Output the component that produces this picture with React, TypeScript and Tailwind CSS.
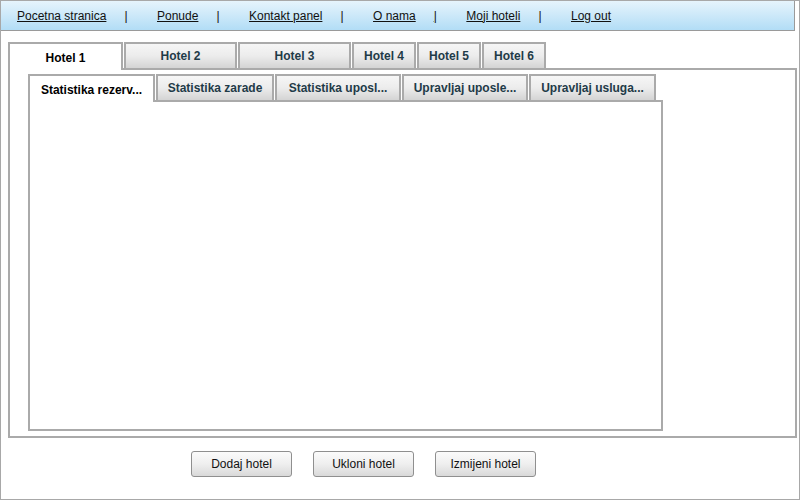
const navItems = ['Pocetna stranica', 'Ponude', 'Kontakt panel', 'O nama', 'Moji hoteli', 'Log out'];

const hotelTabs = [
  { label: 'Hotel 1', w: 'w-[115px]' },
  { label: 'Hotel 2', w: 'w-[113px]' },
  { label: 'Hotel 3', w: 'w-[113px]' },
  { label: 'Hotel 4', w: 'w-[64px]' },
  { label: 'Hotel 5', w: 'w-[64px]' },
  { label: 'Hotel 6', w: 'w-[64px]' },
];

const innerTabs = [
  { label: 'Statistika rezerv...', w: 'w-[127px]' },
  { label: 'Statistika zarade', w: 'w-[118px]' },
  { label: 'Statistika uposl...', w: 'w-[126px]' },
  { label: 'Upravljaj uposle...', w: 'w-[126px]' },
  { label: 'Upravljaj usluga...', w: 'w-[127px]' },
];

const buttons = ['Dodaj hotel', 'Ukloni hotel', 'Izmijeni hotel'];

function Tab({ label, w, active }: { label: string; w: string; active: boolean }) {
  if (active) {
    return (
      <div
        className={`${w} relative z-10 -mb-[2px] flex h-[28px] items-center justify-center border-2 border-b-0 border-[#aaaaaa] bg-white pt-[2px] text-[12px] font-bold text-black`}
      >
        {label}
      </div>
    );
  }
  return (
    <div
      className={`${w} flex h-[26px] items-start justify-center border-2 border-b-0 border-[#aaaaaa] bg-gradient-to-b from-[#f6f6f6] via-[#ececec] to-[#d4d4d4] pt-[3px] text-[12px] font-bold text-[#1f3b48]`}
    >
      {label}
    </div>
  );
}

export default function App() {
  return (
    <div className="h-[500px] w-[800px] overflow-hidden border border-[#a8a8a8] bg-white font-['Liberation_Sans',Arial,sans-serif]">
      <nav className="flex h-[30px] w-[794px] items-center border border-[#9a9a9a] border-l-0 border-t-0 bg-gradient-to-b from-[#e6f4fc] to-[#b2ddf6] pl-[16px] text-[12px] text-[#111]">
        {navItems.map((item, i) => (
          <div key={item} className="flex items-center">
            <span className={`underline ${i > 0 ? 'ml-[29.5px]' : ''}`}>{item}</span>
            {i < navItems.length - 1 && <span className="ml-[18px] underline">|</span>}
          </div>
        ))}
      </nav>

      <div className="ml-[7px] mt-[11px] w-[789px]">
        <div className="flex items-end gap-[1px]">
          {hotelTabs.map((t, i) => (
            <Tab key={t.label} label={t.label} w={t.w} active={i === 0} />
          ))}
        </div>
        <div className="h-[370px] border-2 border-[#aaaaaa] bg-white pl-[18px] pt-[4px]">
          <div className="flex items-end gap-[1px]">
            {innerTabs.map((t, i) => (
              <Tab key={t.label} label={t.label} w={t.w} active={i === 0} />
            ))}
          </div>
          <div className="h-[331px] w-[635px] border-2 border-[#aaaaaa] bg-white" />
        </div>
      </div>

      <div className="ml-[190px] mt-[13px] flex gap-[21px]">
        {buttons.map((b) => (
          <button
            key={b}
            className="h-[26px] w-[101px] rounded-[3px] border border-[#8f8f8f] bg-gradient-to-b from-[#fbfbfb] via-[#efefef] to-[#d9d9d9] text-[12px] text-[#111]"
          >
            {b}
          </button>
        ))}
      </div>
    </div>
  );
}
